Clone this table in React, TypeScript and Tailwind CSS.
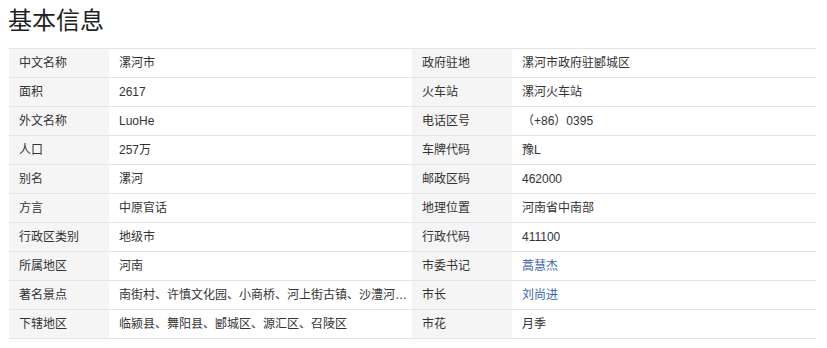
const rows: [string, string, string, string, boolean?][] = [
  ["中文名称", "漯河市", "政府驻地", "漯河市政府驻郾城区"],
  ["面积", "2617", "火车站", "漯河火车站"],
  ["外文名称", "LuoHe", "电话区号", "（+86）0395"],
  ["人口", "257万", "车牌代码", "豫L"],
  ["别名", "漯河", "邮政区码", "462000"],
  ["方言", "中原官话", "地理位置", "河南省中南部"],
  ["行政区类别", "地级市", "行政代码", "411100"],
  ["所属地区", "河南", "市委书记", "蒿慧杰", true],
  ["著名景点", "南街村、许慎文化园、小商桥、河上街古镇、沙澧河风景区", "市长", "刘尚进", true],
  ["下辖地区", "临颍县、舞阳县、郾城区、源汇区、召陵区", "市花", "月季"],
];

export default function App() {
  return (
    <div className="w-[827px] h-[348px] bg-white text-[#333] font-['Liberation_Sans','Noto_Sans_CJK_SC',sans-serif]">
      <h1 className="h-[48px] pl-[8px] pt-[5px] text-[24px] leading-[32px] font-normal text-[#222]">基本信息</h1>
      <div className="ml-[9px] w-[807px] border-t border-[#e5e5e5] text-[12px]">
        {rows.map(([k1, v1, k2, v2, link]) => (
          <div key={k1} className="grid grid-cols-[100px_303px_100px_304px] h-[29px] border-b border-[#e5e5e5] leading-[28px]">
            <div className="bg-[#f5f5f5] pl-[10px]">{k1}</div>
            <div className="pl-[10px] pr-[1px] truncate">{v1}</div>
            <div className="bg-[#f5f5f5] pl-[10px]">{k2}</div>
            <div className={"pl-[10px] truncate " + (link ? "text-[#3b66b0]" : "")}>{v2}</div>
          </div>
        ))}
      </div>
    </div>
  );
}
